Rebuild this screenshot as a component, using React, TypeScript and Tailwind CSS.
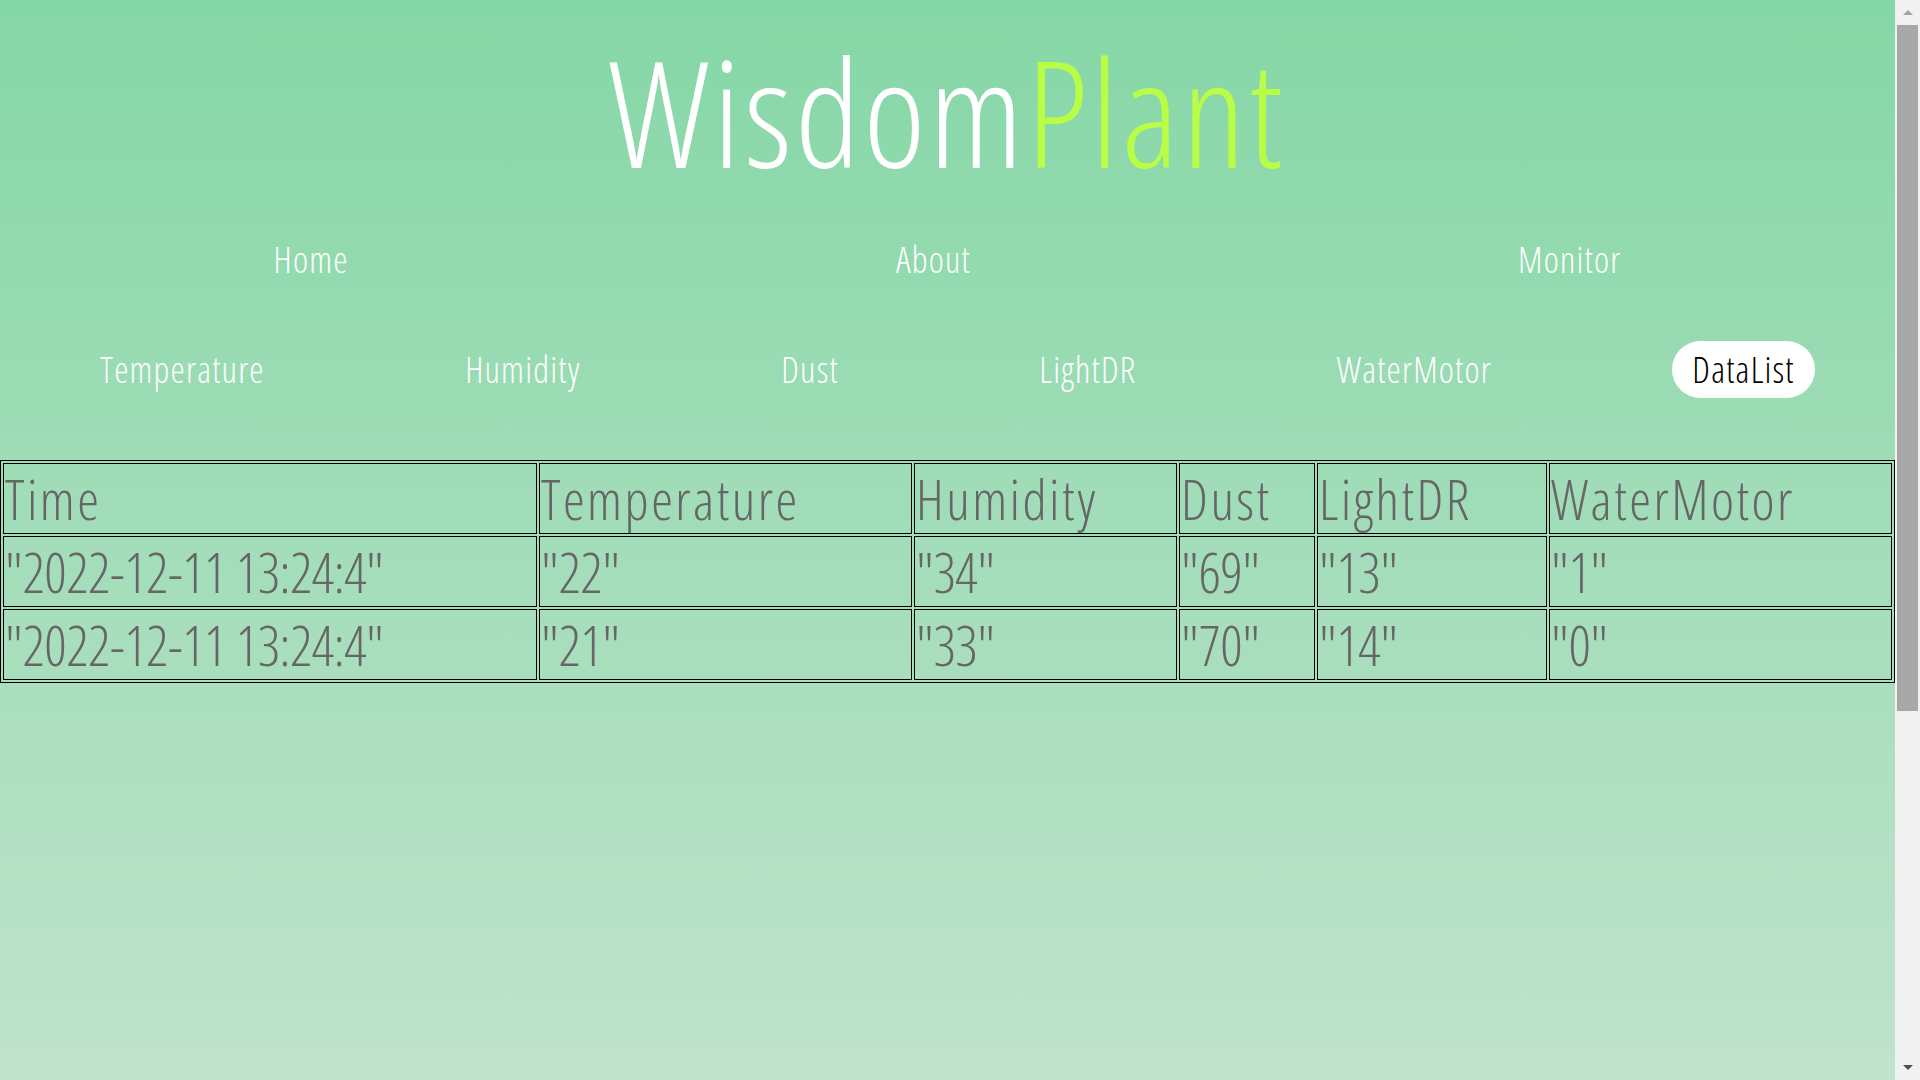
const topLinks = ["Home", "About", "Monitor"];
const sensorLinks = ["Temperature", "Humidity", "Dust", "LightDR", "WaterMotor", "DataList"];

const columns = [
  { name: "Time", w: "w-[534px]" },
  { name: "Temperature", w: "w-[373px]" },
  { name: "Humidity", w: "w-[263px]" },
  { name: "Dust", w: "w-[136px]" },
  { name: "LightDR", w: "w-[230px]" },
  { name: "WaterMotor", w: "" },
];

const rows = [
  ["2022-12-11 13:24:4", "22", "34", "69", "13", "1"],
  ["2022-12-11 13:24:4", "21", "33", "70", "14", "0"],
];

function ScrollBar() {
  return (
    <div className="flex h-screen w-[25px] shrink-0 flex-col bg-[#f1f1f1]">
      <div className="flex h-[25px] items-center justify-center">
        <div className="h-0 w-0 border-x-[5.5px] border-b-[5px] border-x-transparent border-b-[#a3a3a3]" />
      </div>
      <div className="flex-1 px-[2px]">
        <div className="h-[686px] bg-[#a8a8a8]" />
      </div>
      <div className="flex h-[25px] items-center justify-center">
        <div className="h-0 w-0 border-x-[5.5px] border-t-[5px] border-x-transparent border-t-[#505050]" />
      </div>
    </div>
  );
}

export default function App() {
  return (
    <div className="flex h-screen overflow-hidden">
      <main className="h-screen min-w-0 flex-1 bg-[linear-gradient(to_bottom,#85d7a6,#c0e3cc)] font-['Open_Sans',sans-serif] [font-stretch:condensed] font-light">
        <header className="pt-[37px] text-center">
          <h1 className="text-[148px] leading-[148px] tracking-[3.5px] text-white">
            Wisdom<span className="text-[#b9fd47]">Plant</span>
          </h1>
        </header>

        <nav className="mt-[48px] flex justify-around text-[36px] leading-[54px] tracking-[1.2px] text-white">
          {topLinks.map((l) => (
            <a key={l} href="#">
              {l}
            </a>
          ))}
        </nav>

        <nav className="mt-[54px] flex justify-around text-[36px] leading-[41px] tracking-[1.2px]">
          {sensorLinks.map((l) => (
            <a
              key={l}
              href="#"
              className={l === "DataList" ? "rounded-full bg-white px-5 py-2 text-black" : "px-5 py-2 text-white"}
            >
              {l}
            </a>
          ))}
        </nav>

        <table className="mt-[62px] w-full table-fixed border-separate border-spacing-[2px] border border-black text-[55px] leading-[67px] text-[#666666]">
          <thead>
            <tr>
              {columns.map((c) => (
                <th key={c.name} className={`${c.w} border border-black p-[1px] text-left font-light tracking-[2.5px]`}>
                  {c.name}
                </th>
              ))}
            </tr>
          </thead>
          <tbody>
            {rows.map((r, i) => (
              <tr key={i}>
                {r.map((v, j) => (
                  <td key={j} className="whitespace-nowrap border border-black p-[1px] tracking-[-0.5px]">
                    "{v}"
                  </td>
                ))}
              </tr>
            ))}
          </tbody>
        </table>
      </main>
      <ScrollBar />
    </div>
  );
}
